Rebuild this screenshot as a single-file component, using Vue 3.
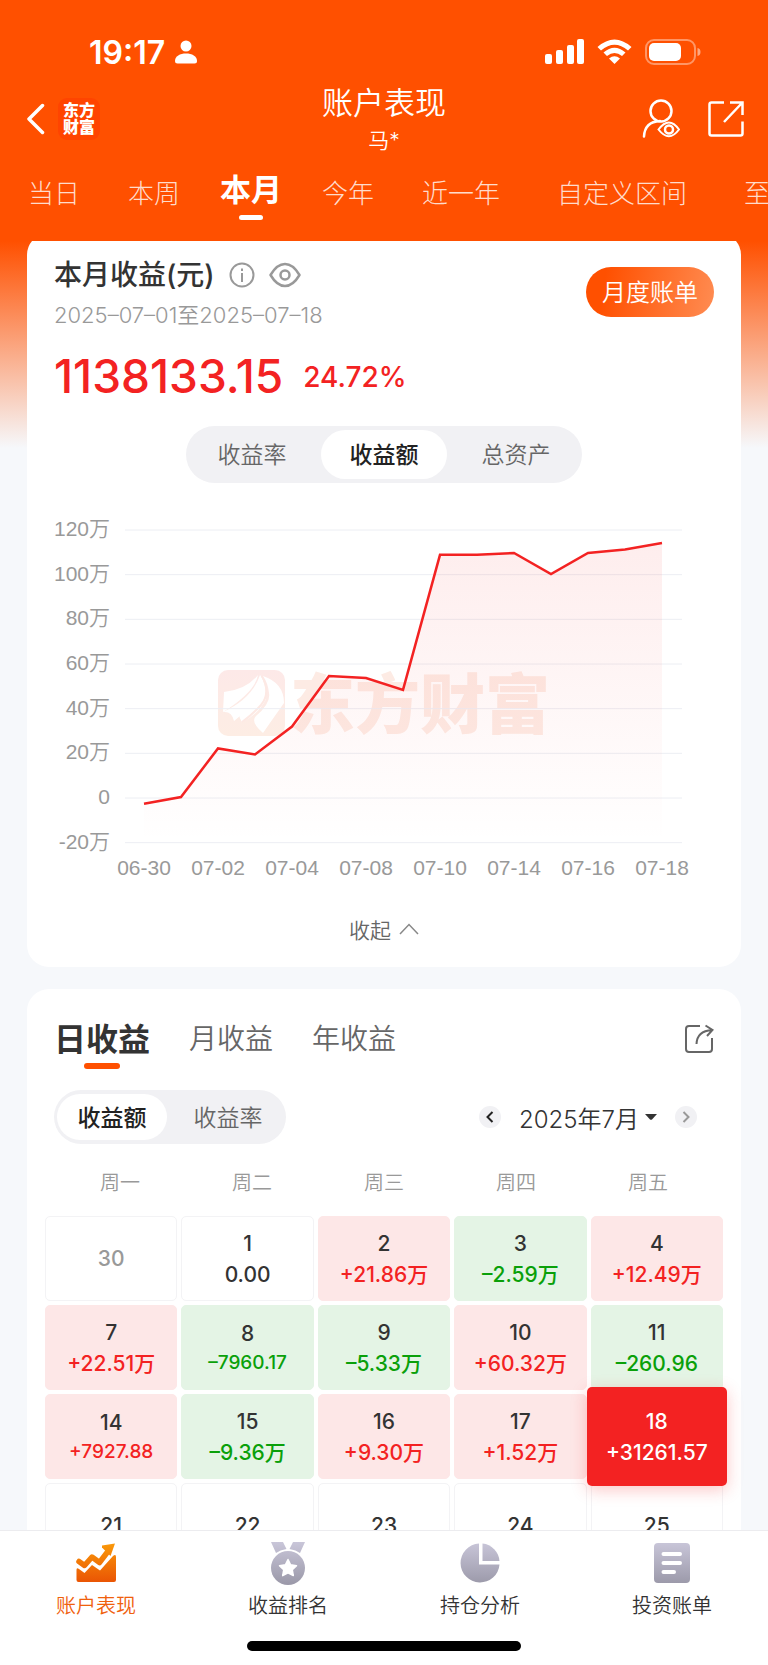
<script setup>
import { computed, ref } from "vue";

// 顶部区间
const ranges = [
  { name: "当日" },
  { name: "本周" },
  { name: "本月" },
  { name: "今年" },
  { name: "近一年" },
  { name: "自定义区间", wide: true },
  { name: "至今" },
];
const range = ref("本月");

// 图表
const chartTypes = ["收益率", "收益额", "总资产"];
const chartType = ref("收益额");
const isOpen = ref(true);
const ticks = [120, 100, 80, 60, 40, 20, 0, -20];
const dates = ["06-30", "07-02", "07-04", "07-08", "07-10", "07-14", "07-16", "07-18"];
const values = [
  -2.6, 0.4, 22.2, 19.5, 32, 54.6, 53.7, 48.4, 108.9, 108.9, 109.7, 100.3,
  109.7, 111.3, 114.2,
];
const getX = (i) => 90 + i * 37;
const getY = (v) => 283 - (v * 67) / 30;
const line = computed(() =>
  values.map((v, i) => `${getX(i)},${getY(v).toFixed(1)}`).join(" ")
);
const area = computed(
  () => `${getX(0)},328 ${line.value} ${getX(values.length - 1)},328`
);

// 收益日历
const periods = ["日收益", "月收益", "年收益"];
const period = ref("日收益");
const calTypes = ["收益额", "收益率"];
const calType = ref("收益额");
const weekdays = ["周一", "周二", "周三", "周四", "周五"];
const weeks = [
  [
    { day: 30, type: "other" },
    { day: 1, text: "0.00" },
    { day: 2, text: "+21.86万", type: "up" },
    { day: 3, text: "–2.59万", type: "down" },
    { day: 4, text: "+12.49万", type: "up" },
  ],
  [
    { day: 7, text: "+22.51万", type: "up" },
    { day: 8, text: "–7960.17", type: "down", small: true },
    { day: 9, text: "–5.33万", type: "down" },
    { day: 10, text: "+60.32万", type: "up" },
    { day: 11, text: "–260.96", type: "down" },
  ],
  [
    { day: 14, text: "+7927.88", type: "up", small: true },
    { day: 15, text: "–9.36万", type: "down" },
    { day: 16, text: "+9.30万", type: "up" },
    { day: 17, text: "+1.52万", type: "up" },
    { day: 18, text: "+31261.57", type: "today" },
  ],
  [{ day: 21 }, { day: 22 }, { day: 23 }, { day: 24 }, { day: 25 }],
];
</script>
<template>
  <div class="page">
    <header class="header">
      <!-- 状态栏 -->
      <div class="status">
        <div class="time">
          <span>19:17</span>
          <svg width="22" height="24" viewBox="0 0 22 24" fill="#fff">
            <circle cx="11" cy="6" r="5.500" />
            <path d="M0 21C0 16 5 13.500 11 13.500S22 16 22 21Q22 23.500 19.500 23.500H2.500Q0 23.500 0 21Z" />
          </svg>
        </div>
        <svg width="156" height="26" viewBox="0 0 156 26" fill="#fff">
          <rect x="0" y="15" width="7" height="10" rx="2" />
          <rect x="11" y="11" width="7" height="14" rx="2" />
          <rect x="22" y="6" width="7" height="19" rx="2" />
          <rect x="32" y="0" width="7" height="25" rx="2" />
          <path d="M52.500 8Q69.500 -7 86.500 8L83 11.500Q69.500 0 56 11.500Z" />
          <path d="M58.500 13.500Q69.500 4 80.500 13.500L77 17Q69.500 11 62 17Z" />
          <path d="M64 19.500Q69.500 15 75 19.500L69.500 25Z" />
          <rect x="101" y="1" width="49" height="24" rx="8" fill="none" stroke="#fff" stroke-opacity=".4" stroke-width="2" />
          <rect x="104" y="4" width="32" height="18" rx="5" />
          <path d="M152.500 9Q155.500 9.500 155.500 13T152.500 17Z" fill-opacity=".5" />
        </svg>
      </div>
      <!-- 标题栏 -->
      <div class="navbar">
        <div class="nav_side">
          <button class="icon_btn back" aria-label="返回">
            <svg width="18" height="32" viewBox="0 0 18 32" fill="none" stroke="#fff" stroke-width="3.500" stroke-linecap="round" stroke-linejoin="round">
              <path d="M15.500 2.500L2 16L15.500 29.500" />
            </svg>
          </button>
          <div class="logo">东方<br />财富</div>
        </div>
        <div class="title">
          <h1>账户表现</h1>
          <p>马*</p>
        </div>
        <div class="nav_side right">
          <button class="icon_btn" aria-label="账户查看">
            <svg width="38" height="40" viewBox="0 0 38 40" fill="none" stroke="#fff" stroke-width="2.500" stroke-linecap="round">
              <circle cx="19" cy="12" r="10.500" />
              <path d="M2 37.500C2.500 28 8 22.500 18 22" />
              <path d="M16.500 30.500Q27 16.500 37 30.500Q27 44 16.500 30.500Z" stroke-width="2" />
              <circle cx="27" cy="30.500" r="4" stroke-width="2.500" />
            </svg>
          </button>
          <button class="icon_btn" aria-label="分享">
            <svg width="36" height="36" viewBox="0 0 36 36" fill="none" stroke="#fff" stroke-width="2.500">
              <path d="M16 1.500H3.500Q1.500 1.500 1.500 3.500V32.500Q1.500 34.500 3.500 34.500H32.500Q34.500 34.500 34.500 32.500V20.500" />
              <path d="M22 1.500H34.500V14M34 2L16 21" />
            </svg>
          </button>
        </div>
      </div>
      <!-- 区间切换 -->
      <nav class="ranges">
        <button
          v-for="r in ranges"
          :key="r.name"
          :class="{ active: range === r.name, wide: r.wide }"
          @click="range = r.name">
          {{ r.name }}
        </button>
      </nav>
    </header>

    <main class="main">
      <section class="card profit">
        <div class="profit_head">
          <div>
            <h2>
              本月收益(元)
              <svg class="info" width="26" height="26" viewBox="0 0 26 26" fill="none" stroke="#999" stroke-width="2">
                <circle cx="13" cy="13" r="11.500" />
                <path d="M13 11V20M13 6.500V9" />
              </svg>
              <svg width="32" height="26" viewBox="0 0 32 26" fill="none" stroke="#999" stroke-width="2.500" stroke-linejoin="round">
                <path d="M1.500 13Q8 2 16 2T30.500 13Q24 24 16 24T1.500 13Z" />
                <circle cx="16" cy="13" r="4.500" />
              </svg>
            </h2>
            <p class="period_text">2025–07–01至2025–07–18</p>
          </div>
          <button class="bill_btn">月度账单</button>
        </div>
        <div class="amount">
          <strong>1138133.15</strong>
          <span>24.72%</span>
        </div>
        <div class="segment chart_seg">
          <button
            v-for="c in chartTypes"
            :key="c"
            :class="{ active: chartType === c }"
            @click="chartType = c">
            {{ c }}
          </button>
        </div>
        <!-- 收益走势 -->
        <svg v-show="isOpen" class="chart" viewBox="0 0 660 370" role="img" aria-label="收益走势">
          <defs>
            <linearGradient id="areaFill" x1="0" y1="0" x2="0" y2="1">
              <stop offset="0" stop-color="#f32222" stop-opacity=".08" />
              <stop offset="1" stop-color="#f32222" stop-opacity="0" />
            </linearGradient>
            <linearGradient id="markFill" x1="0" y1="0" x2="0" y2="1">
              <stop offset="0" stop-color="#fde9e8" />
              <stop offset="1" stop-color="#fdede4" />
            </linearGradient>
          </defs>
          <rect x="164" y="155" width="67" height="66" rx="10" fill="url(#markFill)" />
          <path d="M170 177Q192 175 204 160Q201 177 169 197Z" fill="#fff" />
          <path d="M169 197Q198 184 206 160Q212 177 198 191L180 206Q178 196 169 197Z" fill="#fff" />
          <path d="M206 160Q206 178 194 187Q180 196 188 207Q204 200 212 184Q213 170 206 160Z" fill="#fff" />
          <path d="M208 161Q217 178 207 190Q198 200 188 207" fill="none" stroke="#fde9e4" stroke-width="2" />
          <path d="M209 161Q230 168 230 188Q218 205 209 218Q196 207 202 201Q217 188 215 178Q214 168 209 161Z" fill="#fff" />
          <text class="mark" x="236" y="213">东方财富</text>
          <g class="grid">
            <line v-for="t in ticks" :key="t" x1="71" x2="628" :y1="getY(t)" :y2="getY(t)" />
          </g>
          <polygon :points="area" fill="url(#areaFill)" />
          <polyline :points="line" class="line" />
          <g class="axis">
            <text v-for="t in ticks" :key="t" x="56" :y="getY(t) + 6" text-anchor="end">
              {{ t ? t + "万" : "0" }}
            </text>
            <text v-for="(d, i) in dates" :key="d" :x="getX(i * 2)" y="360" text-anchor="middle">
              {{ d }}
            </text>
          </g>
        </svg>
        <button class="fold" @click="isOpen = !isOpen">
          {{ isOpen ? "收起" : "展开" }}
          <svg :class="{ flip: !isOpen }" width="20" height="12" viewBox="0 0 20 12" fill="none" stroke="#888" stroke-width="1.500">
            <path d="M1 11L10 1.500L19 11" />
          </svg>
        </button>
      </section>

      <section class="card calendar">
        <div class="periods">
          <button
            v-for="p in periods"
            :key="p"
            :class="{ active: period === p }"
            @click="period = p">
            {{ p }}
          </button>
          <button class="icon_btn share" aria-label="分享日历">
            <svg width="30" height="30" viewBox="0 0 30 30" fill="none" stroke="#666" stroke-width="2">
              <path d="M16 2H5Q2 2 2 5V25Q2 28 5 28H25Q28 28 28 25V14" />
              <path d="M12.500 20Q13 7 28 6M21.500 1.500L28.500 6L23 12" />
            </svg>
          </button>
        </div>
        <div class="tools">
          <div class="segment cal_seg">
            <button
              v-for="c in calTypes"
              :key="c"
              :class="{ active: calType === c }"
              @click="calType = c">
              {{ c }}
            </button>
          </div>
          <div class="month">
            <button class="circle" aria-label="上个月">
              <svg width="8" height="12" viewBox="0 0 8 12" fill="none" stroke="#222" stroke-width="2"><path d="M6.500 1L1.500 6L6.500 11" /></svg>
            </button>
            <button class="month_text">
              2025年7月
              <svg width="12" height="6" viewBox="0 0 12 6" fill="#333"><path d="M0 0H12L7 5.500Q6 6 5 5.500Z" /></svg>
            </button>
            <button class="circle" aria-label="下个月">
              <svg width="8" height="12" viewBox="0 0 8 12" fill="none" stroke="#999" stroke-width="2"><path d="M1.500 1L6.500 6L1.500 11" /></svg>
            </button>
          </div>
        </div>
        <table>
          <thead>
            <tr>
              <th v-for="w in weekdays" :key="w" scope="col">{{ w }}</th>
            </tr>
          </thead>
          <tbody>
            <tr v-for="(week, i) in weeks" :key="i">
              <td v-for="d in week" :key="d.day" :class="[d.type, { small: d.small }]">
                <span>{{ d.day }}</span>
                <b v-if="d.text">{{ d.text }}</b>
              </td>
            </tr>
          </tbody>
        </table>
      </section>
    </main>

    <!-- 底部导航 -->
    <footer class="footer">
      <nav class="tabbar">
        <a href="#" class="active">
          <svg width="44" height="44" viewBox="0 0 44 44">
            <defs>
              <linearGradient id="orange" gradientUnits="userSpaceOnUse" x1="0" y1="2" x2="0" y2="41">
                <stop offset="0" stop-color="#fa9a0a" />
                <stop offset="1" stop-color="#ea5504" />
              </linearGradient>
            </defs>
            <path d="M5 20.500L10.500 24.500L18 16L25.500 21.500L35 9" fill="none" stroke="url(#orange)" stroke-width="5.500" stroke-linecap="round" stroke-linejoin="round" />
            <path d="M28 4.500L41 2.500L36.500 15L28 6.500Z" fill="url(#orange)" />
            <path d="M2.500 29Q2.500 26 5 28L10.500 32L18 24L26 29.500L39 15Q42 12.500 42 16V39Q42 41 40 41H4.500Q2.500 41 2.500 39Z" fill="url(#orange)" />
          </svg>
          账户表现
        </a>
        <a href="#">
          <svg width="44" height="44" viewBox="0 0 44 44">
            <defs>
              <linearGradient id="gray" gradientUnits="userSpaceOnUse" x1="0" y1="0" x2="0" y2="44">
                <stop offset="0" stop-color="#cac7da" />
                <stop offset="1" stop-color="#9a98a8" />
              </linearGradient>
            </defs>
            <g fill="url(#gray)">
              <path d="M5 1H17L20.500 8Q14 9 10 12Z" />
              <path d="M39 1H27L23.500 8Q30 9 34 12Z" />
              <circle cx="22" cy="27" r="17" />
            </g>
            <path d="M22 18.500L24.600 23.800L30.500 24.700L26.300 28.800L27.300 34.600L22 31.900L16.700 34.600L17.700 28.800L13.500 24.700L19.400 23.800Z" fill="#fff" stroke="#fff" stroke-width="1.500" stroke-linejoin="round" />
          </svg>
          收益排名
        </a>
        <a href="#">
          <svg width="44" height="44" viewBox="0 0 44 44" fill="url(#gray)">
            <path d="M21 2.500A19.500 19.500 0 1 0 41.500 23.500H21Z" />
            <path d="M24.500 2.500V20H41.500A19 19 0 0 0 24.500 2.500Z" />
          </svg>
          持仓分析
        </a>
        <a href="#">
          <svg width="44" height="44" viewBox="0 0 44 44">
            <rect x="4" y="2" width="36" height="40" rx="4" fill="url(#gray)" />
            <path d="M13.500 13H30M13.500 22H30M13.500 31H24" stroke="#fff" stroke-width="4" stroke-linecap="round" />
          </svg>
          投资账单
        </a>
      </nav>
      <div class="home_bar"></div>
    </footer>
  </div>
</template>
<style>
body {
  margin: 0;
  background-color: #f6f8fb;
}
</style>
<style scoped>
* {
  box-sizing: border-box;
}
.page {
  display: flex;
  flex-direction: column;
  height: 100vh;
  overflow: hidden;
  font-family: Inter, "Noto Sans CJK SC", sans-serif;
  font-weight: 350;
  color: #333;
}
h1,
h2,
p {
  margin: 0;
}
button {
  padding: 0;
  border: none;
  background: none;
  font: inherit;
  color: inherit;
  white-space: nowrap;
  cursor: pointer;
}
svg {
  display: block;
  flex: none;
}
.icon_btn {
  display: flex;
}
/* 头部 */
.header {
  flex: none;
  background-color: #ff5000;
  color: #fff;
}
.status {
  display: flex;
  align-items: center;
  justify-content: space-between;
  height: 72px;
  padding: 32px 67px 0 89px;
}
.time {
  display: flex;
  align-items: center;
  gap: 10px;
  font-size: 32px;
  font-weight: 600;
}
.navbar {
  display: flex;
  align-items: center;
  height: 94px;
  padding: 0 24px;
}
.nav_side {
  display: flex;
  flex: 1;
  align-items: center;
  gap: 13px;
}
.nav_side.right {
  justify-content: flex-end;
  gap: 28px;
}
.back {
  padding-left: 3px;
}
.logo {
  width: 42px;
  padding: 4px 0;
  border-radius: 9px;
  background-color: #ff4400;
  font-size: 16px;
  font-weight: 900;
  line-height: 17px;
  text-align: center;
}
.title {
  text-align: center;
}
.title h1 {
  font-size: 31px;
  font-weight: 350;
  line-height: 44px;
}
.title p {
  font-size: 21px;
  line-height: 32px;
}
.ranges {
  display: flex;
  align-items: center;
  height: 75px;
  padding: 0 0 19px 4px;
  overflow: hidden;
}
.ranges button {
  flex: none;
  padding: 0 24px;
  font-size: 26px;
  font-weight: 300;
  line-height: 44px;
  color: #ffdccc;
}
.ranges .wide {
  padding: 0 33px;
}
.ranges .active {
  position: relative;
  padding: 0 16px 8px;
  font-size: 31px;
  font-weight: 700;
  color: #fff;
}
.ranges .active::after {
  content: "";
  position: absolute;
  bottom: 0;
  left: 50%;
  width: 24px;
  height: 5px;
  margin-left: -12px;
  border-radius: 3px;
  background-color: #fff;
}
/* 内容 */
.main {
  flex: 1;
  min-height: 0;
  padding: 0 27px;
  overflow: hidden;
  background: linear-gradient(#ff5000, #f6f8fb 207px);
}
.card {
  padding: 0 27px;
  border-radius: 22px;
  background-color: #fff;
}
.profit {
  margin-top: -8px;
  padding-top: 22px;
  padding-bottom: 7px;
}
.profit_head {
  display: flex;
  align-items: flex-start;
  justify-content: space-between;
}
.profit h2 {
  display: flex;
  align-items: center;
  font-size: 28px;
  font-weight: 500;
  line-height: 40px;
}
.info {
  margin: 0 14px;
}
.period_text {
  font-size: 22px;
  line-height: 40px;
  color: #999;
}
.bill_btn {
  height: 50px;
  margin-top: 12px;
  padding: 0 16px 3px;
  border-radius: 25px;
  background: linear-gradient(100deg, #ff5000 15%, #ff8c52);
  font-size: 24px;
  color: #fff;
}
.amount {
  display: flex;
  align-items: center;
  gap: 20px;
  height: 82px;
  color: #f32222;
}
.amount strong {
  font-size: 46px;
  font-weight: 500;
}
.amount span {
  padding-top: 2px;
  font-size: 28px;
  font-weight: 500;
}
.segment {
  display: flex;
  padding: 4px 0;
  border-radius: 29px;
  background-color: #f1f1f4;
  font-size: 23px;
  color: #666;
}
.segment button {
  flex: 1;
  margin: 0 3px;
  padding-bottom: 3px;
  border-radius: 25px;
}
.segment .active {
  background-color: #fff;
  font-weight: 500;
  color: #222;
}
.chart_seg {
  width: 60%;
  height: 57px;
  margin: 9px auto 32px;
}
.chart {
  width: 100%;
}
.grid line {
  stroke: #eceef3;
  stroke-width: 1;
}
.line {
  fill: none;
  stroke: #f32222;
  stroke-width: 2.5;
}
.mark {
  font-size: 65px;
  font-weight: 900;
  fill: #fdebe4;
}
.axis text {
  font-family: "Liberation Sans", "Noto Sans CJK SC", sans-serif;
  font-size: 21px;
  fill: #999;
}
.fold {
  display: flex;
  align-items: center;
  gap: 8px;
  height: 60px;
  margin: 15px auto 0;
  padding-bottom: 3px;
  font-size: 21px;
  color: #666;
}
.flip {
  transform: rotate(180deg);
}
/* 日历 */
.calendar {
  margin-top: 22px;
  padding-top: 15px;
  padding-bottom: 20px;
}
.periods {
  display: flex;
  align-items: center;
  gap: 39px;
  height: 70px;
  font-size: 28px;
  color: #666;
}
.periods button {
  padding-bottom: 5px;
}
.periods .active {
  position: relative;
  font-size: 32px;
  font-weight: 700;
  color: #333;
}
.periods .active::after {
  content: "";
  position: absolute;
  bottom: -4px;
  left: 50%;
  width: 36px;
  height: 6px;
  margin-left: -18px;
  border-radius: 3px;
  background-color: #ff5000;
}
.periods .share {
  margin-left: auto;
  padding-bottom: 0;
}
.tools {
  display: flex;
  align-items: center;
  justify-content: space-between;
  margin-top: 16px;
}
.cal_seg {
  width: 232px;
  height: 54px;
}
.month {
  display: flex;
  align-items: center;
  gap: 18px;
  padding-right: 17px;
}
.month_text {
  display: flex;
  align-items: center;
  gap: 6px;
  font-size: 24px;
}
.circle {
  display: flex;
  align-items: center;
  justify-content: center;
  width: 22px;
  height: 22px;
  border-radius: 50%;
  background-color: #f1f1f4;
}
table,
thead,
tbody {
  display: block;
}
table {
  margin: 24px -9px 0;
}
tr {
  display: grid;
  grid-template-columns: repeat(5, 1fr);
}
thead tr {
  padding: 0 9px 18px;
}
th {
  padding: 0;
  font-size: 20px;
  font-weight: 350;
  line-height: 30px;
  color: #999;
}
tbody {
  display: grid;
  gap: 4px;
}
tbody tr {
  gap: 4px;
}
td {
  display: flex;
  flex-direction: column;
  align-items: center;
  justify-content: center;
  height: 85px;
  padding: 0;
  border: 1px solid #f3f3f5;
  border-radius: 5px;
  font-size: 21px;
  font-weight: 500;
  line-height: 31px;
}
td b {
  font-weight: 500;
}
td.small b {
  font-size: 19px;
  line-height: 28px;
}
.other {
  color: #999;
}
.up {
  border-color: #fde7e7;
  background-color: #fde7e7;
}
.up b {
  color: #f32222;
}
.down {
  border-color: #e4f4e5;
  background-color: #e4f4e5;
}
.down b {
  color: #0aa00a;
}
.today {
  z-index: 1;
  height: 99px;
  margin: -7px -4px;
  border: none;
  background-color: #f32222;
  box-shadow: 0 4px 16px rgba(243, 34, 34, 0.25);
  color: #fff;
}
/* 底部 */
.footer {
  flex: none;
  padding-bottom: 14px;
  border-top: 1px solid #ececef;
  background-color: #fff;
}
.tabbar {
  display: flex;
}
.tabbar a {
  display: flex;
  flex: 1;
  flex-direction: column;
  align-items: center;
  padding-top: 10px;
  font-size: 20px;
  line-height: 42px;
  color: #333;
  text-decoration: none;
}
.tabbar .active {
  color: #f0600c;
}
.home_bar {
  width: 274px;
  height: 10px;
  margin: 14px auto 0;
  border-radius: 5px;
  background-color: #000;
}
</style>
